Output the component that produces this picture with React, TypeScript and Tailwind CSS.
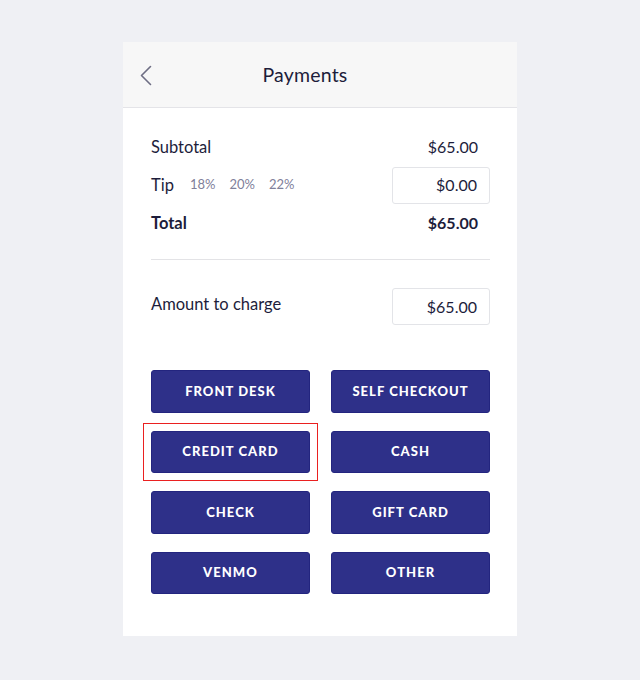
const methods = [
  "FRONT DESK",
  "SELF CHECKOUT",
  "CREDIT CARD",
  "CASH",
  "CHECK",
  "GIFT CARD",
  "VENMO",
  "OTHER",
];

const AmountBox = ({ value }: { value: string }) => (
  <div className="flex h-[37px] w-[98px] items-center justify-end rounded-[3px] border border-[#e3e4e8] bg-white pr-3 text-[16px] text-[#1d1d3b]">
    {value}
  </div>
);

const App = () => {
  return (
    <div
      className="min-h-[680px] bg-[#eff0f4] pt-[42px]"
      style={{ fontFamily: "Lato, 'Open Sans', sans-serif" }}
    >
      <div className="mx-auto w-[394px] bg-white">
        {/* header */}
        <div className="relative flex h-[66px] items-center justify-center border-b border-[#e4e4e8] bg-[#f7f7f7] pr-[30px]">
          <svg
            className="absolute left-[16px] top-[23px]"
            width="14"
            height="21"
            viewBox="0 0 14 21"
            fill="none"
          >
            <polyline
              points="11.5,1.5 2.5,10.5 11.5,19.5"
              stroke="#6e6e84"
              strokeWidth="1.6"
              strokeLinecap="round"
              strokeLinejoin="round"
            />
          </svg>
          <span className="text-[19.5px] tracking-[0.01em] text-[#1d1d3b]">Payments</span>
        </div>

        <div className="pb-[42px] pl-7 pr-[27px] pt-[21px] text-[#1d1d3b]">
          <div className="flex flex-col gap-0.5">
            <div className="flex h-9 items-center justify-between">
              <span className="text-[16.5px]">Subtotal</span>
              <span className="pr-3 text-[16px]">$65.00</span>
            </div>
            <div className="flex h-9 items-center justify-between">
              <div className="flex items-center">
                <span className="text-[16.5px]">Tip</span>
                <span className="ml-4 text-[13px] text-[#80809a]">18%</span>
                <span className="ml-[14px] text-[13px] text-[#80809a]">20%</span>
                <span className="ml-[14px] text-[13px] text-[#80809a]">22%</span>
              </div>
              <AmountBox value="$0.00" />
            </div>
            <div className="flex h-9 items-center justify-between font-bold">
              <span className="text-[16.5px]">Total</span>
              <span className="pr-3 text-[16px]">$65.00</span>
            </div>
          </div>

          <div className="mt-[18px] h-px bg-[#e3e3e6]" />

          <div className="mt-7 flex items-center justify-between">
            <span className="-mt-1 text-[16.5px]">Amount to charge</span>
            <AmountBox value="$65.00" />
          </div>

          <div className="mt-[45px] grid grid-cols-2 gap-x-[21px] gap-y-[18px]">
            {methods.map((m) => (
              <div key={m} className="relative">
                {m === "CREDIT CARD" && (
                  <span className="pointer-events-none absolute -inset-2 border-[1.5px] border-[#ea2020]" />
                )}
                <button className="flex h-[42.5px] w-full items-center justify-center rounded-[3px] border border-[#23257f] bg-[#2e3089] text-[13px] font-black tracking-[0.08em] text-white">
                  {m}
                </button>
              </div>
            ))}
          </div>
        </div>
      </div>
    </div>
  );
};

export default App;
